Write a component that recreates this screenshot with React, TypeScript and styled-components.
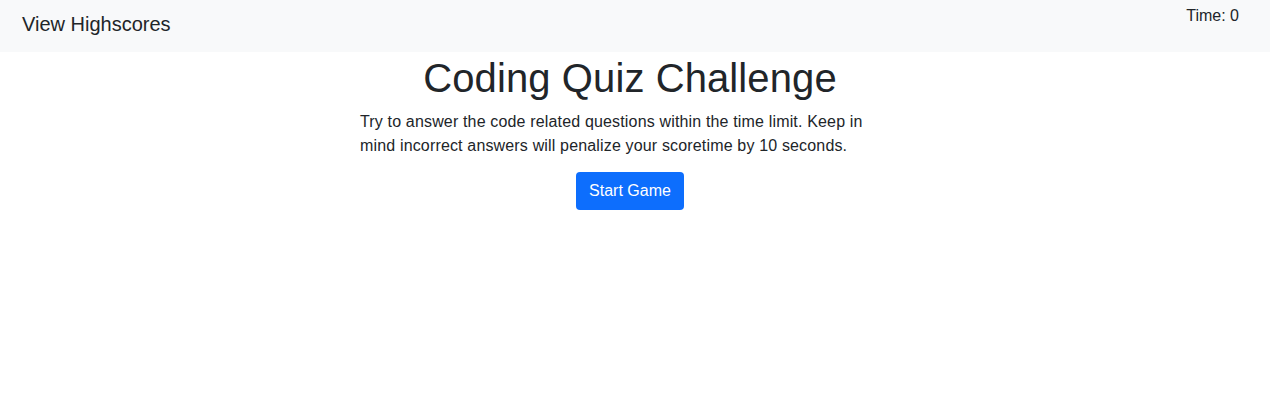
import styled, { createGlobalStyle } from "styled-components";

const GlobalStyle = createGlobalStyle`
  body {
    margin: 0;
    font-family: "Liberation Sans", Arial, sans-serif;
    color: #212529;
    background: #fff;
  }
`;

const NavBar = styled.nav`
  display: flex;
  justify-content: space-between;
  align-items: flex-start;
  height: 52px;
  padding: 0 31px 0 22px;
  background: #f8f9fa;
  box-sizing: border-box;
`;

const Brand = styled.a`
  font-size: 20px;
  line-height: 30px;
  padding-top: 9px;
  color: #212529;
  text-decoration: none;
  cursor: pointer;
`;

const Timer = styled.div`
  font-size: 16px;
  line-height: 24px;
  padding-top: 4px;
`;

const Main = styled.main`
  display: flex;
  justify-content: center;
  padding-right: 10px;
`;

const Card = styled.section`
  width: 540px;
  display: flex;
  flex-direction: column;
  align-items: center;
`;

const Title = styled.h1`
  margin: 2px 0 8px;
  font-size: 40px;
  font-weight: 400;
  line-height: 48px;
  letter-spacing: 0.1px;
`;

const Intro = styled.p`
  align-self: flex-start;
  width: 522px;
  margin: 0 0 14px;
  font-size: 16px;
  line-height: 24px;
  letter-spacing: 0.16px;
`;

const Button = styled.button`
  font-family: inherit;
  font-size: 16px;
  line-height: 24px;
  padding: 7px 13px;
  color: #fff;
  background: #0d6efd;
  border: none;
  border-radius: 4px;
  cursor: pointer;
`;

const App = () => {
  return (
    <>
      <GlobalStyle />
      <NavBar>
        <Brand>View Highscores</Brand>
        <Timer>Time: 0</Timer>
      </NavBar>
      <Main>
        <Card>
          <Title>Coding Quiz Challenge</Title>
          <Intro>
            Try to answer the code related questions within the time limit. Keep in mind
            incorrect answers will penalize your scoretime by 10 seconds.
          </Intro>
          <Button>Start Game</Button>
        </Card>
      </Main>
    </>
  );
};

export default App;
